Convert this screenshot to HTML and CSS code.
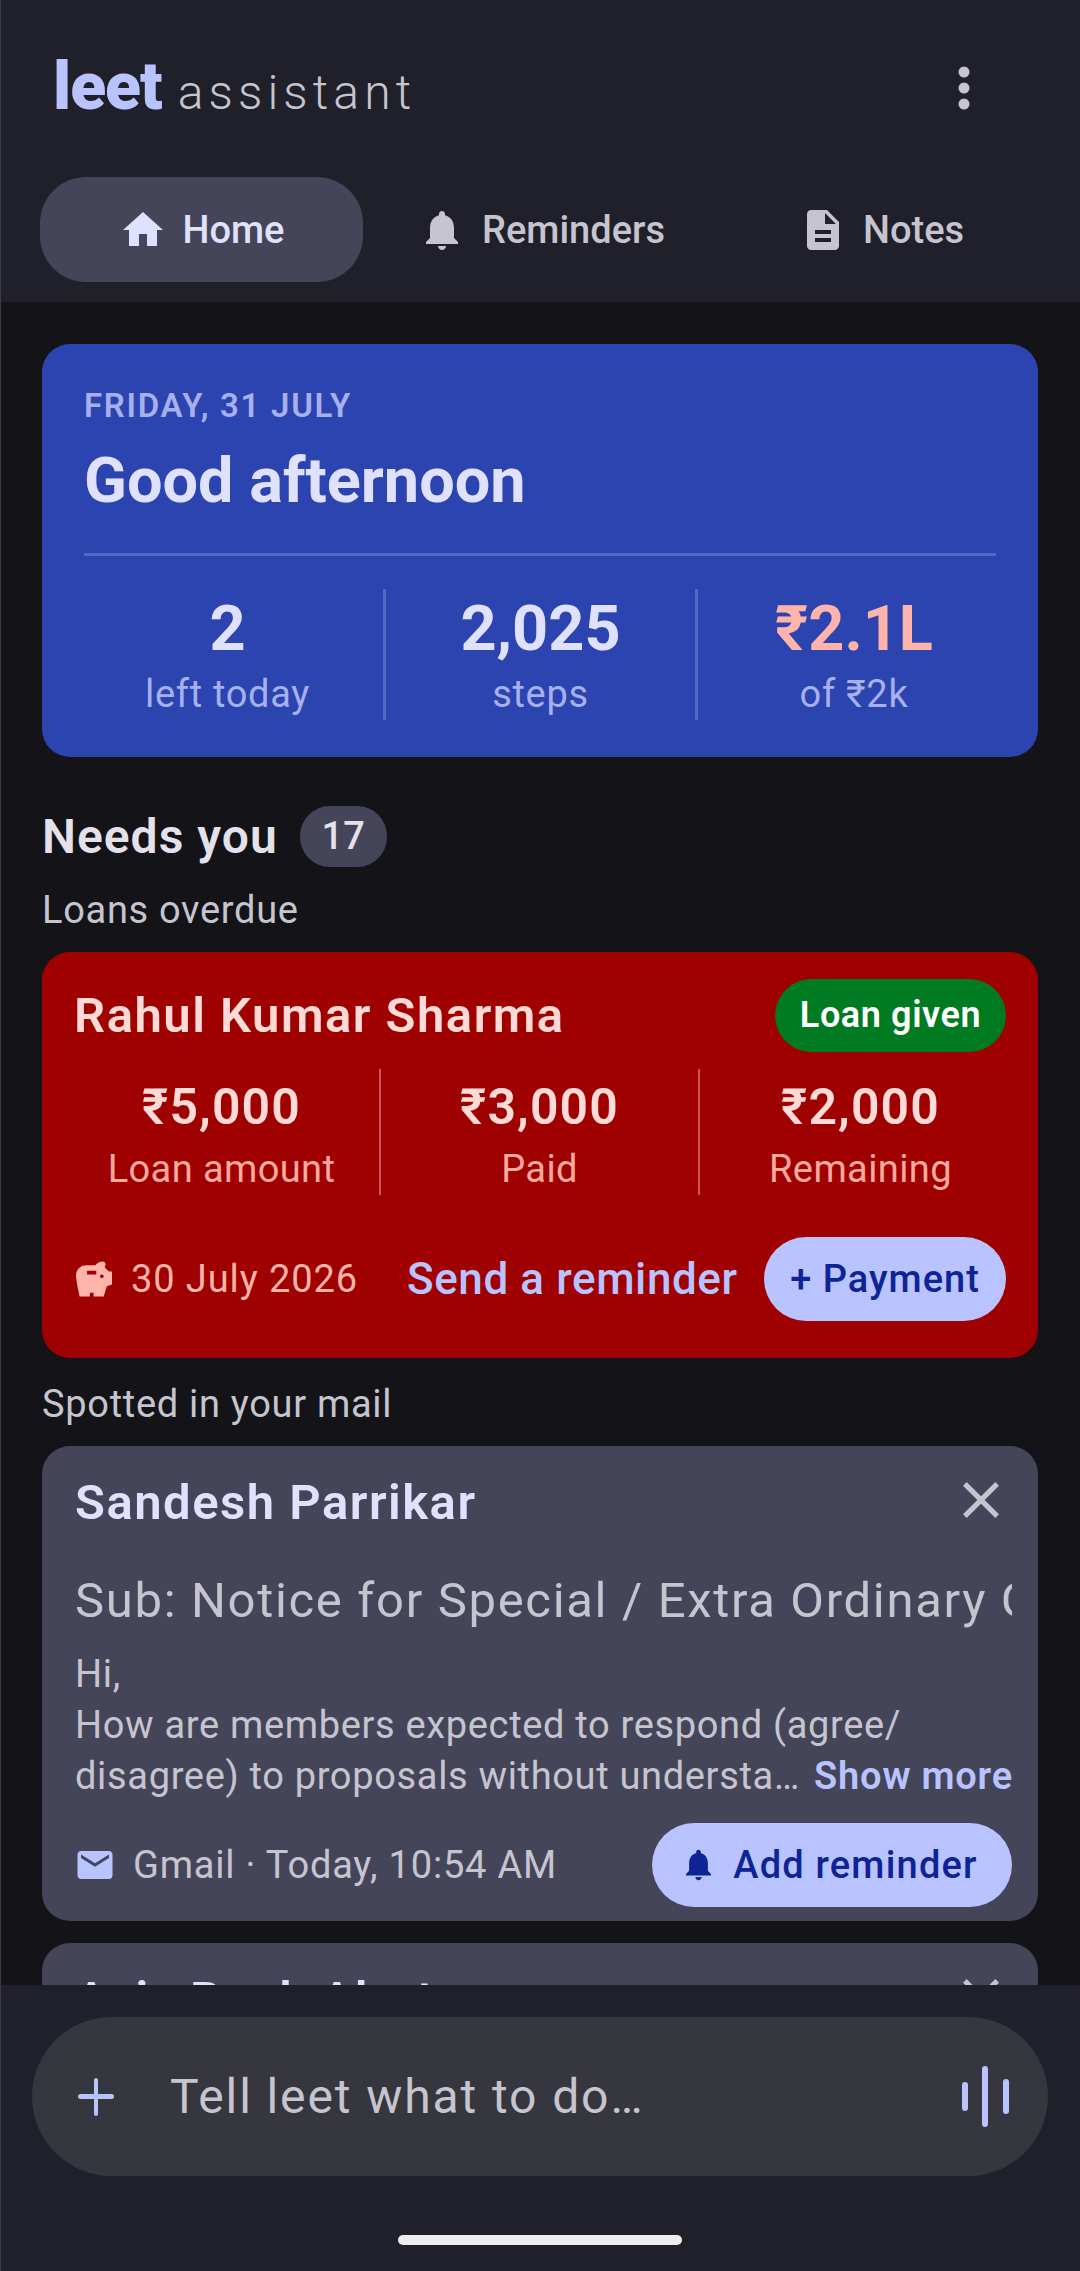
FILE: index.html
```html
<!DOCTYPE html>
<html lang="en">
<head>
    <meta charset="UTF-8">
    <title>leet assistant</title>
    <link rel="stylesheet" href="styles.css">
</head>
<body>

<header class="topBar">
    <div class="brandRow">
        <div class="brand"><span class="brandName">leet</span><span class="brandSub">assistant</span></div>
        <svg class="moreIcon" width="12" height="44" viewBox="0 0 12 44"><circle cx="6" cy="6" r="5.5"/><circle cx="6" cy="22" r="5.5"/><circle cx="6" cy="38" r="5.5"/></svg>
    </div>
    <nav class="tabs">
        <div class="tab tabActive">
            <svg class="tabIcon" viewBox="0 0 24 24"><path d="M10 20v-6h4v6h5v-8h3L12 3 2 12h3v8z"/></svg>
            <span>Home</span>
        </div>
        <div class="tab">
            <svg class="tabIcon" viewBox="0 0 24 24"><path d="M12 22c1.1 0 2-.9 2-2h-4c0 1.1.9 2 2 2zm6-6v-5c0-3.07-1.63-5.64-4.5-6.32V4c0-.83-.67-1.5-1.5-1.5s-1.5.67-1.5 1.5v.68C7.64 5.36 6 7.92 6 11v5l-2 2v1h16v-1l-2-2z"/></svg>
            <span>Reminders</span>
        </div>
        <div class="tab">
            <svg class="tabIcon" viewBox="0 0 24 24"><path d="M14 2H6c-1.1 0-1.99.9-1.99 2L4 20c0 1.1.89 2 1.99 2H18c1.1 0 2-.9 2-2V8l-6-6zm2 16H8v-2h8v2zm0-4H8v-2h8v2zm-3-5V3.5L18.5 9H13z"/></svg>
            <span>Notes</span>
        </div>
    </nav>
</header>

<main class="content">
    <section class="todayCard">
        <div class="todayDate">FRIDAY, 31 JULY</div>
        <h1 class="greeting">Good afternoon</h1>
        <div class="todayStats">
            <div class="stat">
                <div class="statValue">2</div>
                <div class="statLabel">left today</div>
            </div>
            <div class="stat">
                <div class="statValue">2,025</div>
                <div class="statLabel">steps</div>
            </div>
            <div class="stat">
                <div class="statValue statOver">₹2.1L</div>
                <div class="statLabel">of ₹2k</div>
            </div>
        </div>
    </section>

    <div class="needsRow">
        <h2 class="needsTitle">Needs you</h2>
        <span class="needsCount">17</span>
    </div>

    <div class="groupLabel">Loans overdue</div>
    <section class="loanCard">
        <div class="loanHead">
            <div class="loanName">Rahul Kumar Sharma</div>
            <span class="loanBadge">Loan given</span>
        </div>
        <div class="loanStats">
            <div class="loanStat">
                <div class="loanValue">₹5,000</div>
                <div class="loanLabel">Loan amount</div>
            </div>
            <div class="loanStat">
                <div class="loanValue">₹3,000</div>
                <div class="loanLabel">Paid</div>
            </div>
            <div class="loanStat">
                <div class="loanValue">₹2,000</div>
                <div class="loanLabel">Remaining</div>
            </div>
        </div>
        <div class="loanFoot">
            <svg class="loanIcon" viewBox="2 2 19.5 19"><path d="M19.83 7.5l-2.27-2.27c.07-.42.18-.81.32-1.15.08-.18.12-.37.12-.58 0-.83-.67-1.5-1.5-1.5-1.64 0-3.09.79-4 2h-5C4.46 4 2 6.46 2 9.5S4 21 4 21h5.5v-2h2v2H17l1.68-5.59 2.82-.95V7.5h-1.67zM13 9H8V7h5v2zm3 2c-.55 0-1-.45-1-1s.45-1 1-1 1 .45 1 1-.45 1-1 1z"/></svg>
            <span class="loanDate">30 July 2026</span>
            <span class="loanLink">Send a reminder</span>
            <span class="payButton">+ Payment</span>
        </div>
    </section>

    <div class="groupLabel groupMail">Spotted in your mail</div>
    <section class="mailCard">
        <div class="mailHead">
            <div class="mailName">Sandesh Parrikar</div>
            <svg class="closeIcon" viewBox="5 5 14 14"><path d="M19 6.41L17.59 5 12 10.59 6.41 5 5 6.41 10.59 12 5 17.59 6.41 19 12 13.41 17.59 19 19 17.59 13.41 12z"/></svg>
        </div>
        <div class="mailSubject">Sub: Notice for Special / Extra Ordinary General Meeting</div>
        <div class="mailBody">
            Hi,<br>
            How are members expected to respond (agree/<br>
            disagree) to proposals without understa…&nbsp;<span class="showMore">Show more</span>
        </div>
        <div class="mailFoot">
            <svg class="mailIcon" viewBox="2 4 20 16"><path d="M20 4H4c-1.1 0-1.99.9-1.99 2L2 18c0 1.1.9 2 2 2h16c1.1 0 2-.9 2-2V6c0-1.1-.9-2-2-2zm0 4l-8 5-8-5V6l8 5 8-5v2z"/></svg>
            <span class="mailSource">Gmail · Today, 10:54 AM</span>
            <span class="reminderButton">
                <svg class="buttonBell" viewBox="4 2.5 16 19.5"><path d="M12 22c1.1 0 2-.9 2-2h-4c0 1.1.9 2 2 2zm6-6v-5c0-3.07-1.63-5.64-4.5-6.32V4c0-.83-.67-1.5-1.5-1.5s-1.5.67-1.5 1.5v.68C7.64 5.36 6 7.92 6 11v5l-2 2v1h16v-1l-2-2z"/></svg>
                Add reminder
            </span>
        </div>
    </section>
    <section class="mailCard">
        <div class="mailHead">
            <div class="mailName">Axis Bank Alerts</div>
            <svg class="closeIcon" viewBox="5 5 14 14"><path d="M19 6.41L17.59 5 12 10.59 6.41 5 5 6.41 10.59 12 5 17.59 6.41 19 12 13.41 17.59 19 19 17.59 13.41 12z"/></svg>
        </div>
    </section>
</main>

<footer class="bottomBar">
    <div class="askBox">
        <svg class="plusIcon" width="36" height="38" viewBox="0 0 36 38"><rect x="16" y="0" width="4" height="38" rx="2"/><rect x="0" y="16" width="36" height="5" rx="2.5"/></svg>
        <span class="askText">Tell leet what to do…</span>
        <svg class="waveIcon" width="47" height="61" viewBox="0 0 47 61"><rect x="0" y="16" width="6" height="29" rx="3"/><rect x="20" y="0" width="6" height="61" rx="3"/><rect x="41" y="13" width="6" height="35" rx="3"/></svg>
    </div>
    <div class="homeIndicator"></div>
</footer>

</body>
</html>
```

FILE: styles.css
```css
* {
    box-sizing: border-box;
}

body {
    margin: 0;
    width: 1080px;
    height: 2271px;
    position: relative;
    display: flex;
    flex-direction: column;
    overflow: hidden;
    font-family: Roboto, "Noto Sans", sans-serif;
    background-color: #131318;
    color: #C6C5CF;
}

/* thin lighter line down the left screen edge */
body::after {
    content: "";
    position: absolute;
    top: 0;
    bottom: 0;
    left: 0;
    width: 1px;
    background-color: #3C3C42;
    z-index: 2;
}

h1, h2 {
    margin: 0;
}

/* Top bar */
.topBar {
    height: 302px;
    flex: none;
    background-color: #1F2029;
}

.brandRow {
    height: 177px;
    padding: 54px 110px 0 53px;
    display: flex;
    justify-content: space-between;
    align-items: flex-start;
}

.brand {
    display: flex;
    align-items: baseline;
    height: 66px;
    line-height: 66px;
}

.brandName {
    font-size: 66px;
    font-weight: 900;
    letter-spacing: -1px;
    color: #B8C3FF;
}

.brandSub {
    margin-left: 16px;
    font-size: 48px;
    font-weight: 300;
    letter-spacing: 5.1px;
    color: #C6C5CF;
}

.moreIcon {
    margin-top: 12px;
    fill: #C6C5CF;
}

.tabs {
    display: flex;
    gap: 17px;
    padding-left: 40px;
}

.tab {
    width: 323px;
    height: 105px;
    border-radius: 46px;
    display: flex;
    align-items: center;
    justify-content: center;
    gap: 16px;
    font-size: 38px;
    font-weight: 500;
    color: #C6C5CF;
}

.tabActive {
    background-color: #444559;
    color: #E0E1FF;
}

.tabIcon {
    width: 48px;
    height: 48px;
    fill: currentColor;
}

/* Scrolling content */
.content {
    flex: 1;
    min-height: 0;
    overflow: hidden;
    padding: 42px 42px 0;
}

.todayCard {
    height: 413px;
    padding: 42px 42px 0;
    border-radius: 28px;
    background-color: #2B44B0;
}

.todayDate {
    font-size: 33px;
    line-height: 40px;
    font-weight: 600;
    letter-spacing: 1.7px;
    color: #A6B0EC;
}

.greeting {
    margin-top: 14px;
    font-size: 63px;
    line-height: 82px;
    font-weight: 700;
    color: #E0E1FF;
}

.todayStats {
    margin-top: 31px;
    padding-top: 33px;
    border-top: 3px solid #5468C4;
    display: grid;
    grid-template-columns: 299px 312px 301px;
}

.stat {
    height: 131px;
    text-align: center;
    border-left: 3px solid #5468C4;
}

.stat:first-child {
    border-left: none;
    padding-right: 12px;
}

.stat:last-child {
    padding-left: 14px;
}

.statValue {
    margin-top: 5px;
    font-size: 63px;
    line-height: 70px;
    font-weight: 700;
    color: #E0E1FF;
}

.statOver {
    color: #FFB4AB;
}

.statLabel {
    margin-top: 7px;
    font-size: 38px;
    line-height: 46px;
    letter-spacing: 0.7px;
    color: #A6B0EC;
}

.needsRow {
    margin-top: 49px;
    display: flex;
    align-items: center;
    gap: 22px;
}

.needsTitle {
    font-size: 48px;
    line-height: 61px;
    font-weight: 600;
    letter-spacing: 1px;
    color: #E4E1E9;
}

.needsCount {
    width: 87px;
    height: 61px;
    border-radius: 30px;
    background-color: #444559;
    color: #E4E1E9;
    font-size: 38px;
    font-weight: 500;
    line-height: 61px;
    text-align: center;
}

.groupLabel {
    margin-top: 18px;
    height: 50px;
    font-size: 38px;
    line-height: 50px;
    letter-spacing: 0.7px;
    color: #C6C5CF;
}

.groupMail {
    margin-top: 24px;
    height: 64px;
    line-height: 44px;
}

/* Loan card */
.loanCard {
    height: 406px;
    margin-top: 17px;
    padding: 27px 32px 0;
    border-radius: 28px;
    background-color: #9F0000;
    color: #FFDAD6;
}

.loanHead {
    display: flex;
    justify-content: space-between;
    align-items: center;
}

.loanName {
    font-size: 49px;
    font-weight: 600;
    letter-spacing: 1.5px;
}

.loanBadge {
    width: 231px;
    height: 73px;
    border-radius: 37px;
    background-color: #007B22;
    color: #FFFFFF;
    font-size: 36px;
    font-weight: 600;
    letter-spacing: 0.6px;
    line-height: 73px;
    text-align: center;
}

.loanStats {
    margin-top: 17px;
    display: grid;
    grid-template-columns: 305px 319px 307px;
}

.loanStat {
    height: 126px;
    text-align: center;
    border-left: 2px solid #D0555B;
}

.loanStat:first-child {
    border-left: none;
    padding-right: 10px;
}

.loanStat:last-child {
    padding-left: 16px;
}

.loanValue {
    margin-top: 10px;
    font-size: 50px;
    line-height: 56px;
    font-weight: 600;
    letter-spacing: 1.1px;
}

.loanLabel {
    margin-top: 11px;
    font-size: 38px;
    line-height: 46px;
    letter-spacing: 0.4px;
    color: #FFA9A1;
}

.loanFoot {
    margin-top: 42px;
    display: flex;
    align-items: center;
}

.loanIcon {
    width: 36px;
    height: 38px;
    margin-left: 2px;
    fill: #FFB4AB;
}

.loanDate {
    margin-left: 19px;
    font-size: 38px;
    letter-spacing: 0.9px;
    color: #FFB4AB;
}

.loanLink {
    margin-left: 49px;
    font-size: 44px;
    font-weight: 500;
    letter-spacing: 0.6px;
    color: #B8C3FF;
}

.payButton {
    margin-left: auto;
    width: 242px;
    height: 84px;
    border-radius: 42px;
    background-color: #B8C3FF;
    color: #0F2494;
    font-size: 38px;
    font-weight: 500;
    letter-spacing: 1px;
    line-height: 84px;
    text-align: center;
}

/* Mail card */
.mailCard {
    height: 475px;
    margin-bottom: 22px;
    padding: 30px 26px 0 33px;
    border-radius: 28px;
    background-color: #444559;
}

.mailHead {
    display: flex;
    justify-content: space-between;
    padding-right: 13px;
}

.mailName {
    font-size: 49px;
    line-height: 54px;
    font-weight: 600;
    letter-spacing: 1.5px;
    color: #E0E1FF;
}

.closeIcon {
    width: 36px;
    height: 36px;
    margin-top: 6px;
    fill: #C6C5CF;
}

.mailSubject {
    margin-top: 41px;
    font-size: 49px;
    line-height: 60px;
    letter-spacing: 1.67px;
    white-space: nowrap;
    overflow: hidden;
}

.mailBody {
    margin-top: 18px;
    font-size: 38px;
    line-height: 51px;
    letter-spacing: 0.67px;
    white-space: nowrap;
}

.showMore {
    margin-left: 4px;
    font-weight: 600;
    letter-spacing: 0.8px;
    color: #B8C3FF;
}

.mailFoot {
    margin-top: 21px;
    display: flex;
    align-items: center;
}

.mailIcon {
    width: 36px;
    height: 28px;
    margin-left: 2px;
    fill: #B8C3FF;
}

.mailSource {
    margin-left: 20px;
    font-size: 38px;
    letter-spacing: 0.8px;
}

.reminderButton {
    margin-left: auto;
    width: 360px;
    height: 84px;
    border-radius: 42px;
    background-color: #B8C3FF;
    color: #0F2494;
    font-size: 38px;
    font-weight: 500;
    letter-spacing: 1.2px;
    display: flex;
    align-items: center;
    justify-content: center;
    gap: 22px;
}

.buttonBell {
    width: 25px;
    height: 32px;
    fill: #0F2494;
}

/* Bottom bar */
.bottomBar {
    height: 286px;
    flex: none;
    position: relative;
    z-index: 1;
    padding: 32px 32px 0;
    background-color: #1F2029;
}

.askBox {
    height: 159px;
    border-radius: 80px;
    background-color: #36363F;
    display: flex;
    align-items: center;
    padding: 0 39px 0 46px;
}

.plusIcon {
    fill: #B8C3FF;
}

.askText {
    margin-left: 56px;
    font-size: 48px;
    letter-spacing: 1.9px;
    color: #C6C5CF;
}

.waveIcon {
    margin-left: auto;
    fill: #B8C3FF;
}

.homeIndicator {
    width: 284px;
    height: 10px;
    margin: 59px auto 0;
    border-radius: 5px;
    background-color: #EEEEEE;
}
```
